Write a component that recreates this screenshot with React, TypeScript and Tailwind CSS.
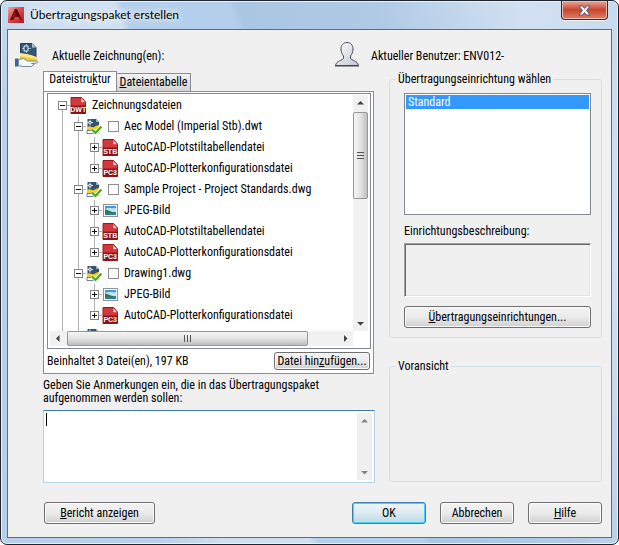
import React from "react";

type RowData = {
  level: 0 | 1 | 2;
  label: string;
  icon: "DWT" | "STB" | "PC3" | "JPG" | "DWG";
  open?: boolean;
  first?: boolean;
  last?: boolean;
};

const rows: RowData[] = [
  { level: 0, label: "Zeichnungsdateien", icon: "DWT", open: true, first: true },
  { level: 1, label: "Aec Model (Imperial Stb).dwt", icon: "DWG", open: true },
  { level: 2, label: "AutoCAD-Plotstiltabellendatei", icon: "STB" },
  { level: 2, label: "AutoCAD-Plotterkonfigurationsdatei", icon: "PC3", last: true },
  { level: 1, label: "Sample Project - Project Standards.dwg", icon: "DWG", open: true },
  { level: 2, label: "JPEG-Bild", icon: "JPG" },
  { level: 2, label: "AutoCAD-Plotstiltabellendatei", icon: "STB" },
  { level: 2, label: "AutoCAD-Plotterkonfigurationsdatei", icon: "PC3", last: true },
  { level: 1, label: "Drawing1.dwg", icon: "DWG", open: true },
  { level: 2, label: "JPEG-Bild", icon: "JPG" },
  { level: 2, label: "AutoCAD-Plotterkonfigurationsdatei", icon: "PC3", last: true },
  { level: 1, label: "", icon: "DWG", open: true },
];

function Guide() {
  return (
    <svg width="16" height="21" className="shrink-0" shapeRendering="crispEdges">
      <path d="M8.5 0V21" stroke="#b4b4b4" />
    </svg>
  );
}

function Toggle({ row }: { row: RowData }) {
  return (
    <button type="button" aria-label={row.open ? "Reduzieren" : "Erweitern"} className="shrink-0">
      <svg width="16" height="21" className="block" shapeRendering="crispEdges" fill="none">
        <path
          d={(row.first ? "M8.5 15V21" : row.last ? "M8.5 0V6" : "M8.5 0V6M8.5 15V21") + "M13 10.5H16"}
          stroke="#b4b4b4"
        />
        <rect x="4.5" y="6.5" width="8" height="8" fill="#fff" stroke="#848484" />
        <path d={row.open ? "M6 10.5H11" : "M6 10.5H11M8.5 8V13"} stroke="#111" />
      </svg>
    </button>
  );
}

function RowIcon({ kind }: { kind: RowData["icon"] }) {
  if (kind === "DWG") {
    return (
      <svg width="16" height="17" viewBox="0 0 16 17" className="shrink-0" aria-hidden="true">
        <path d="M1.500 1H10l3 3v10.500H1.500z" fill="#34526f" />
        <path d="M10 1l3 3h-3z" fill="#9db4c8" />
        <path d="M1 9c3-2 5 1 7 0s3-2 5-2v6H1z" fill="#f5cf24" />
        <path d="M1 12.500h7v3H1z" fill="#fff" stroke="#34526f" strokeWidth=".7" />
        <path d="M4 1.500v6M1 4.500h6" stroke="#d7e6f2" />
        <rect x="3" y="3.500" width="2" height="2" fill="#34526f" stroke="#fff" strokeWidth=".7" />
        <path d="M6 11.500l3.500 3.500 6-6.500" fill="none" stroke="#fff" strokeWidth="3.600" />
        <path d="M6 11.500l3.500 3.500 6-6.500" fill="none" stroke="#45a81c" strokeWidth="2.200" />
      </svg>
    );
  }
  if (kind === "JPG") {
    return (
      <svg width="16" height="17" viewBox="0 0 16 17" className="shrink-0" aria-hidden="true">
        <rect x="1.500" y="2.500" width="14" height="12" fill="#fff" stroke="#8e9499" />
        <rect x="3" y="4" width="11" height="9" fill="#3d9be0" />
        <path d="M3 7c4-2 7 0 11-1v4H3z" fill="#bfe4f7" />
        <path d="M3 7.500c3 0 4 2.500 11 3V11H3z" fill="#2e7a4c" />
        <path d="M3 11h11v2H3z" fill="#2a78b4" />
      </svg>
    );
  }
  return (
    <svg width="16" height="17" viewBox="0 0 16 17" className="shrink-0" aria-hidden="true">
      <path d="M1 .5h10.500L15.500 5v11.500H1z" fill="#c42127" stroke="#96181c" />
      <path d="M1.500 1h9L15 5.500V8H1.500z" fill="#d3383c" />
      <path d="M11 .5l4.500 5H11z" fill="#f3d5d5" stroke="#a8292c" strokeWidth=".5" />
      <rect x="1" y="9" width="14.500" height="7.500" fill="#8d1216" />
      <text x="8.200" y="15.300" fill="#fff" fontSize="7" fontWeight="700" textAnchor="middle" fontFamily="Liberation Sans, sans-serif">
        {kind}
      </text>
    </svg>
  );
}

function TreeRow({ row, index }: { row: RowData; index: number }) {
  const id = "file-" + index;
  return (
    <li className="flex h-[21px] items-center">
      {row.level > 0 && <Guide />}
      {row.level > 1 && <Guide />}
      <Toggle row={row} />
      <RowIcon kind={row.icon} />
      {row.level === 1 ? (
        <>
          <input
            id={id}
            type="checkbox"
            aria-label={row.label || "Zeichnung"}
            className="ml-1.5 size-[11px] shrink-0 appearance-none border border-[#8e8f8f] bg-white"
          />
          <label htmlFor={id} className="ml-[5px] whitespace-nowrap">
            {row.label}
          </label>
        </>
      ) : (
        <span className="ml-1.5 whitespace-nowrap">{row.label}</span>
      )}
    </li>
  );
}

function Arrow({ dir, dim }: { dir: "up" | "down" | "left" | "right"; dim?: boolean }) {
  const shapes = {
    up: "M4 9.500L7.500 6L11 9.500z",
    down: "M4 6L7.500 9.500L11 6z",
    left: "M9.500 4L6 7.500L9.500 11z",
    right: "M6 4L9.500 7.500L6 11z",
  };
  return (
    <button type="button" tabIndex={-1} aria-label={dir} className="size-[15px] shrink-0">
      <svg width="15" height="15" className="block">
        <path d={shapes[dir]} fill={dim ? "#858585" : "#404040"} />
      </svg>
    </button>
  );
}

function Push({ children, className = "" }: { children: React.ReactNode; className?: string }) {
  return (
    <button
      type="button"
      className={
        "rounded-[3px] border border-[#707070] bg-linear-to-b from-[#f3f3f3] from-0% via-[#ebebeb] via-50% to-[#cfcfcf] to-100% whitespace-nowrap shadow-[inset_0_0_0_1px_#fafafa] " +
        className
      }
    >
      {children}
    </button>
  );
}

function Group({ title, className, children }: { title: string; className: string; children?: React.ReactNode }) {
  return (
    <fieldset className={"min-w-0 rounded-[3px] border border-[#d3dfe7] " + className}>
      <legend className="ml-1.5 px-0.5 leading-4 whitespace-nowrap">{title}</legend>
      {children}
    </fieldset>
  );
}

export default function App() {
  return (
    <div className="flex min-h-screen w-full flex-col bg-white font-['Roboto_Condensed','Roboto','Liberation_Sans',sans-serif] text-[12px] leading-[13px] text-black">
      <div className="flex flex-1 flex-col rounded-[7px] border border-[#20242c] bg-[#b9d1ea] bg-[linear-gradient(70deg,#b5cfea_0%,#b9d1ea_20%,#cfe0f1_28%,#cfe0f1_38%,#b4cfeb_39%,#b4cfeb_52%,#a9c6e2_53%,#b0cae5_70%,#d2e1f1_88%,#c6daee_100%)] px-1.5 pb-1.5 shadow-[inset_0_0_0_1px_#e8f2fb]">
        <header className="flex h-7 items-start justify-between pr-1 pl-px">
          <div className="flex h-7 items-center gap-1.5">
            <svg width="16" height="16" viewBox="0 0 16 16" aria-hidden="true">
              <defs>
                <linearGradient id="app" x2="1" y2="1">
                  <stop stopColor="#f3a9a6" />
                  <stop offset=".5" stopColor="#d2474a" />
                  <stop offset="1" stopColor="#b3191d" />
                </linearGradient>
              </defs>
              <rect width="16" height="16" fill="url(#app)" />
              <path d="M2 13L7 2h2l5 11h-3L8 9l-3 4z" fill="#5e0508" />
              <path d="M2 13L7 2l1 6z" fill="#8f1013" />
              <path d="M5 11l6-1 1 3z" fill="#e34a43" />
            </svg>
            <h1 className="font-['Lato','Open_Sans',sans-serif] text-[12px] leading-4 [text-shadow:0_0_8px_#fff,0_0_8px_#fff]">
              Übertragungspaket erstellen
            </h1>
          </div>
          <button
            type="button"
            aria-label="Schließen"
            className="flex h-[19px] w-[47px] items-center justify-center rounded-b-[4px] border border-t-0 border-[#5c1c1c] bg-linear-to-b from-[#e5a598] from-0% via-[#c8422c] via-50% to-[#d98069] to-100% shadow-[inset_0_0_0_1px_#eebdb3,0_1px_0_#f4f9fd]"
          >
            <svg width="13" height="11" viewBox="0 0 13 11" aria-hidden="true">
              <path d="M1 1h3.500l2 2.500 2-2.500H12L8.500 5.500 12 10H8.500l-2-2.500-2 2.500H1l3.500-4.500z" fill="#fff" stroke="#565a70" />
            </svg>
          </button>
        </header>

        <main className="flex flex-1 flex-col border border-[#5f6c7c] bg-[#f0f0f0] pr-[9px] pl-1.5">
          <div className="flex h-[41px] items-center pt-3">
            <div className="flex flex-1 items-center gap-3">
              <svg width="26" height="28" viewBox="0 1 26 28" aria-hidden="true">
                <path d="M6.500 1.500H18l4 4V20H6.500z" fill="#355674" stroke="#25425e" />
                <path d="M18 1.500l4 4h-4z" fill="#b6c8d7" />
                <path d="M8 6.500h9M12.500 2v9" fill="none" stroke="#8fb2cf" />
                <path d="M10 4h4v5h-4z" fill="#355674" stroke="#e8f0f6" />
                <path d="M6 12c6 0 8 0 17 3v6H6z" fill="#f5ce2a" />
                <path d="M6 11c6 1 11 1 17 5v1L6 14z" fill="#fae991" />
                <path d="M1 16.500h3.500v8H1z" fill="#3c6793" />
                <path d="M4.500 17.500l5-1 4 2.500h8c3 0 3 2 1 2l-5 .5 3 .5-3 2.500H9l-4.500-1z" fill="#f4f8fb" stroke="#6d87a3" />
              </svg>
              <p>Aktuelle Zeichnung(en):</p>
            </div>
            <div className="flex w-[268px] items-center gap-[11px] pb-1">
              <svg width="26" height="27" viewBox="0 0 26 27" aria-hidden="true">
                <defs>
                  <linearGradient id="usr" x2="1" y2="1">
                    <stop stopColor="#fff" />
                    <stop offset="1" stopColor="#c3c6d2" />
                  </linearGradient>
                </defs>
                <path
                  d="M13 1.500c4 0 6 3 6 6.500 0 3-1 5-2.500 7v2.500c1 2 7 2 8 7H1.500c1-5 7-5 8-7V15C8 13 7 11 7 8c0-3.500 2-6.500 6-6.500z"
                  fill="url(#usr)"
                  stroke="#4c4f5c"
                />
                <path d="M1 25h24" stroke="#3e414d" />
              </svg>
              <p className="pt-1">Aktueller Benutzer: ENV012-</p>
            </div>
          </div>

          <div className="grid grid-cols-[332fr_213fr] gap-x-3.5 pl-[29px]">
            <section className="flex min-w-0 flex-col">
              <div role="tablist" className="flex h-5 items-end">
                <button type="button" role="tab" aria-selected="true" className="h-5 w-[74px] border border-b-0 border-[#8a8d98] bg-white pb-1">
                  Dateistru<u>k</u>tur
                </button>
                <button
                  type="button"
                  role="tab"
                  aria-selected="false"
                  className="h-[18px] w-[74px] border border-b-0 border-l-0 border-[#8a8d98] bg-linear-to-b from-[#f2f2f2] to-[#d4d4d4]"
                >
                  <u>D</u>ateientabelle
                </button>
              </div>

              <div className="mr-px border border-[#8a8d98] bg-white pt-px pr-0.5 pl-[3px]">
                <div className="border border-[#828790] px-0.5 pt-px pb-0.5">
                  <div className="flex h-[236px]">
                    <ul className="min-w-0 flex-1 overflow-hidden pl-1">
                      {rows.map((row, i) => (
                        <TreeRow key={i} row={row} index={i} />
                      ))}
                    </ul>
                    <div className="flex w-[15px] flex-col bg-[#f1f1f1]">
                      <Arrow dir="up" />
                      <div className="mt-0.5 flex h-[87px] flex-col items-center justify-center gap-0.5 rounded-[2px] border border-[#979797] bg-linear-to-r from-[#f5f5f5] via-[#e3e3e3] to-[#bfbfbf]">
                        <i className="h-px w-[7px] bg-[#555]" />
                        <i className="h-px w-[7px] bg-[#555]" />
                        <i className="h-px w-[7px] bg-[#555]" />
                      </div>
                      <div className="flex-1" />
                      <Arrow dir="down" />
                    </div>
                  </div>
                  <div className="mr-[15px] flex h-[15px] bg-[#f1f1f1]">
                    <Arrow dir="left" />
                    <div className="ml-0.5 flex flex-[240] items-center justify-center gap-0.5 rounded-[2px] border border-[#979797] bg-linear-to-b from-[#f5f5f5] via-[#e3e3e3] to-[#bfbfbf]">
                      <i className="h-[7px] w-px bg-[#555]" />
                      <i className="h-[7px] w-px bg-[#555]" />
                      <i className="h-[7px] w-px bg-[#555]" />
                    </div>
                    <div className="flex-[30]" />
                    <Arrow dir="right" />
                  </div>
                </div>
                <div className="flex items-center justify-between py-[3px] pr-px">
                  <p>Beinhaltet 3 Datei(en), 197 KB</p>
                  <Push className="h-[18px] w-24">
                    Datei hin<u>z</u>ufügen...
                  </Push>
                </div>
              </div>

              <label htmlFor="notes" className="mt-[5px] block pr-10">
                Geben Sie Anmerkungen ein, die in das Übertragungspaket aufgenommen werden sollen:
              </label>
              <div className="mt-[5px] flex h-[73px] border border-[#b5d3e7] border-t-[#3d7bad] bg-white p-0.5">
                <i className="h-[13px] w-px bg-black" />
                <textarea id="notes" className="min-w-0 flex-1 resize-none overflow-hidden outline-none" />
                <div className="flex w-[15px] flex-col justify-between bg-[#f0f0f0]">
                  <Arrow dir="up" dim />
                  <Arrow dir="down" dim />
                </div>
              </div>
            </section>

            <section className="flex min-w-0 flex-col">
              <Group title="Übertragungseinrichtung wählen" className="h-[267px]">
                <div className="mt-1.5 flex flex-col pr-2.5 pl-3.5">
                  <select size={8} aria-label="Übertragungseinrichtung" defaultValue="Standard" className="block h-[122px] w-full overflow-hidden border border-[#828790] bg-white p-px outline-none">
                    <option value="Standard" className="min-h-[13px] bg-[#3399ff] bg-linear-to-r from-[#3399ff] to-[#3399ff] px-0.5 py-0 leading-[13px] text-white">
                      Standard
                    </option>
                  </select>
                  <label htmlFor="desc" className="mt-2.5 block">
                    Einrichtungsbeschreibung:
                  </label>
                  <textarea
                    id="desc"
                    readOnly
                    className="mt-[5px] block h-[54px] w-full resize-none border border-t-[#a0a0a0] border-r-white border-b-white border-l-[#a0a0a0] bg-[#f0f0f0] shadow-[inset_1px_1px_0_#696969,inset_-1px_-1px_0_#e3e3e3] outline-none"
                  />
                  <Push className="mt-[9px] h-[22px] w-full">
                    <u>Ü</u>bertragungseinrichtungen...
                  </Push>
                </div>
              </Group>
              <Group title="Voransicht" className="mt-5 h-[124px]" />
            </section>
          </div>

          <footer className="mt-[19px] mb-[13px] flex pl-[30px]">
            <Push className="h-[22px] w-[111px]">
              <u>B</u>ericht anzeigen
            </Push>
            <div className="flex flex-1 justify-end gap-3.5">
              <button
                type="submit"
                className="h-[22px] w-[74px] rounded-[3px] border border-[#3c7fb1] bg-linear-to-b from-[#eef5f9] via-[#dcebf3] to-[#bcd9e7] shadow-[inset_0_0_0_1px_#45d3f7]"
              >
                OK
              </button>
              <Push className="h-[22px] w-[74px]">Abbrechen</Push>
              <Push className="h-[22px] w-[74px]">
                <u>H</u>ilfe
              </Push>
            </div>
          </footer>
        </main>
      </div>
    </div>
  );
}
